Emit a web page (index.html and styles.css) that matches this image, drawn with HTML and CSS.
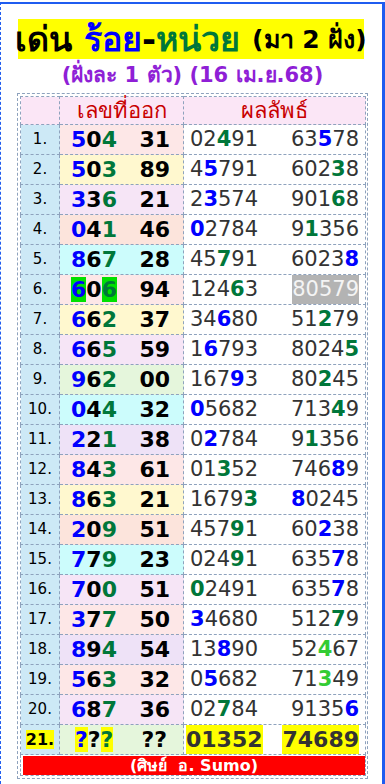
FILE: index.html
```html
<!DOCTYPE html>
<html lang="th">
<head>
    <meta charset="UTF-8">
    <meta name="viewport" content="width=device-width, initial-scale=1.0">
    <title>เด่น ร้อย-หน่วย</title>
    <link rel="stylesheet" href="styles.css">
</head>
<body>
    <div class="frame">
        <div class="title">
            <span class="k">เด่น</span>&nbsp;<span class="b">ร้อย</span><span class="k">-</span><span class="g">หน่วย</span>&nbsp;<span class="small">(มา 2 ฝั่ง)</span>
        </div>
        <div class="subtitle">(ฝั่งละ 1 ตัว) (16 เม.ย.68)</div>

        <div class="table-wrap">
            <table class="board">
                <colgroup>
                    <col class="c-no">
                    <col class="c-pick">
                    <col class="c-res">
                </colgroup>
                <tr class="head">
                    <td></td>
                    <td>เลขที่ออก</td>
                    <td>ผลลัพธ์</td>
                </tr>
                <tr>
                    <td class="no">1.</td>
                    <td class="pick bg-pink"><div class="cell"><span><i class="b">5</i>0<i class="g">4</i></span><span>31</span></div></td>
                    <td class="res"><div class="cell"><span>02<i class="g">4</i>91</span><span>63<i class="b">5</i>78</span></div></td>
                </tr>
                <tr>
                    <td class="no">2.</td>
                    <td class="pick bg-yellow"><div class="cell"><span><i class="b">5</i>0<i class="g">3</i></span><span>89</span></div></td>
                    <td class="res"><div class="cell"><span>4<i class="b">5</i>791</span><span>602<i class="g">3</i>8</span></div></td>
                </tr>
                <tr>
                    <td class="no">3.</td>
                    <td class="pick bg-lilac"><div class="cell"><span><i class="b">3</i>3<i class="g">6</i></span><span>21</span></div></td>
                    <td class="res"><div class="cell"><span>2<i class="b">3</i>574</span><span>901<i class="g">6</i>8</span></div></td>
                </tr>
                <tr>
                    <td class="no">4.</td>
                    <td class="pick bg-peach"><div class="cell"><span><i class="b">0</i>4<i class="g">1</i></span><span>46</span></div></td>
                    <td class="res"><div class="cell"><span><i class="b">0</i>2784</span><span>9<i class="g">1</i>356</span></div></td>
                </tr>
                <tr>
                    <td class="no">5.</td>
                    <td class="pick bg-cyan"><div class="cell"><span><i class="b">8</i>6<i class="g">7</i></span><span>28</span></div></td>
                    <td class="res"><div class="cell"><span>45<i class="g">7</i>91</span><span>6023<i class="b">8</i></span></div></td>
                </tr>
                <tr>
                    <td class="no">6.</td>
                    <td class="pick bg-pink"><div class="cell"><span><i class="b mark">6</i>0<i class="g mark">6</i></span><span>94</span></div></td>
                    <td class="res"><div class="cell"><span>124<i class="g">6</i>3</span><span class="grey">80579</span></div></td>
                </tr>
                <tr>
                    <td class="no">7.</td>
                    <td class="pick bg-yellow"><div class="cell"><span><i class="b">6</i>6<i class="g">2</i></span><span>37</span></div></td>
                    <td class="res"><div class="cell"><span>34<i class="b">6</i>80</span><span>51<i class="g">2</i>79</span></div></td>
                </tr>
                <tr>
                    <td class="no">8.</td>
                    <td class="pick bg-lilac"><div class="cell"><span><i class="b">6</i>6<i class="g">5</i></span><span>59</span></div></td>
                    <td class="res"><div class="cell"><span>1<i class="b">6</i>793</span><span>8024<i class="g">5</i></span></div></td>
                </tr>
                <tr>
                    <td class="no">9.</td>
                    <td class="pick bg-green"><div class="cell"><span><i class="b">9</i>6<i class="g">2</i></span><span>00</span></div></td>
                    <td class="res"><div class="cell"><span>167<i class="b">9</i>3</span><span>80<i class="g">2</i>45</span></div></td>
                </tr>
                <tr>
                    <td class="no">10.</td>
                    <td class="pick bg-cyan"><div class="cell"><span><i class="b">0</i>4<i class="g">4</i></span><span>32</span></div></td>
                    <td class="res"><div class="cell"><span><i class="b">0</i>5682</span><span>713<i class="g">4</i>9</span></div></td>
                </tr>
                <tr>
                    <td class="no">11.</td>
                    <td class="pick bg-violet"><div class="cell"><span><i class="b">2</i>2<i class="g">1</i></span><span>38</span></div></td>
                    <td class="res"><div class="cell"><span>0<i class="b">2</i>784</span><span>9<i class="g">1</i>356</span></div></td>
                </tr>
                <tr>
                    <td class="no">12.</td>
                    <td class="pick bg-pink"><div class="cell"><span><i class="b">8</i>4<i class="g">3</i></span><span>61</span></div></td>
                    <td class="res"><div class="cell"><span>01<i class="g">3</i>52</span><span>746<i class="b">8</i>9</span></div></td>
                </tr>
                <tr>
                    <td class="no">13.</td>
                    <td class="pick bg-yellow"><div class="cell"><span><i class="b">8</i>6<i class="g">3</i></span><span>21</span></div></td>
                    <td class="res"><div class="cell"><span>1679<i class="g">3</i></span><span><i class="b">8</i>0245</span></div></td>
                </tr>
                <tr>
                    <td class="no">14.</td>
                    <td class="pick bg-peach"><div class="cell"><span><i class="b">2</i>0<i class="g">9</i></span><span>51</span></div></td>
                    <td class="res"><div class="cell"><span>457<i class="g">9</i>1</span><span>60<i class="b">2</i>38</span></div></td>
                </tr>
                <tr>
                    <td class="no">15.</td>
                    <td class="pick bg-cyan"><div class="cell"><span><i class="b">7</i>7<i class="g">9</i></span><span>23</span></div></td>
                    <td class="res"><div class="cell"><span>024<i class="g">9</i>1</span><span>635<i class="b">7</i>8</span></div></td>
                </tr>
                <tr>
                    <td class="no">16.</td>
                    <td class="pick bg-lilac"><div class="cell"><span><i class="b">7</i>0<i class="g">0</i></span><span>51</span></div></td>
                    <td class="res"><div class="cell"><span><i class="g">0</i>2491</span><span>635<i class="b">7</i>8</span></div></td>
                </tr>
                <tr>
                    <td class="no">17.</td>
                    <td class="pick bg-pink"><div class="cell"><span><i class="b">3</i>7<i class="g">7</i></span><span>50</span></div></td>
                    <td class="res"><div class="cell"><span><i class="b">3</i>4680</span><span>512<i class="g">7</i>9</span></div></td>
                </tr>
                <tr>
                    <td class="no">18.</td>
                    <td class="pick bg-violet"><div class="cell"><span><i class="b">8</i>9<i class="g">4</i></span><span>54</span></div></td>
                    <td class="res"><div class="cell"><span>13<i class="b">8</i>90</span><span>52<i class="lg">4</i>67</span></div></td>
                </tr>
                <tr>
                    <td class="no">19.</td>
                    <td class="pick bg-pink"><div class="cell"><span><i class="b">5</i>6<i class="g">3</i></span><span>32</span></div></td>
                    <td class="res"><div class="cell"><span>0<i class="b">5</i>682</span><span>71<i class="lg">3</i>49</span></div></td>
                </tr>
                <tr>
                    <td class="no">20.</td>
                    <td class="pick bg-lilac"><div class="cell"><span><i class="b">6</i>8<i class="g">7</i></span><span>36</span></div></td>
                    <td class="res"><div class="cell"><span>02<i class="g">7</i>84</span><span>9135<i class="b">6</i></span></div></td>
                </tr>
                <tr class="next">
                    <td class="no"><span class="hl">21.</span></td>
                    <td class="pick bg-green"><div class="cell"><span class="qs"><i class="b hl">?</i>?<i class="g hl">?</i></span><span>??</span></div></td>
                    <td class="res"><div class="cell"><span class="hl">01352</span><span class="hl">74689</span></div></td>
                </tr>
                <tr>
                    <td colspan="3" class="foot"><div class="credit">(ศิษย์&nbsp; อ. Sumo)</div></td>
                </tr>
            </table>
        </div>
    </div>
</body>
</html>
```

FILE: styles.css
```css
body {
    margin: 0;
    background-color: white;
    font-family: Tahoma, "DejaVu Sans", sans-serif;
}
.frame {
    width: 381px;
    margin-top: 2px;
    border-top: 2px solid #1f5cf0;
    border-right: 3px solid #1f5cf0;
    border-left: 1px dashed #1f5cf0;
    padding-top: 15px;
    padding-bottom: 10px;
}
.title {
    width: 346px;
    height: 40px;
    margin-left: 17px;
    background-color: #ffff00;
    display: flex;
    align-items: center;
    justify-content: center;
    font-size: 34px;
    line-height: 1;
    font-weight: bold;
    white-space: nowrap;
}
.title .small {
    font-size: 25px;
}
.k { color: black; }
.b { color: #0000ff; }
.g { color: #00773a; }
.lg { color: #33cc33; }
i {
    font-style: normal;
}
.subtitle {
    height: 34px;
    text-align: center;
    color: #8f1fd6;
    font-size: 21px;
    font-weight: bold;
    line-height: 32px;
    padding-left: 2px;
}
.table-wrap {
    width: 345px;
    margin-left: 16px;
    padding: 2px;
    border: 1px dashed #8ea2bd;
}
.board {
    width: 345px;
    table-layout: fixed;
    border-collapse: collapse;
}
.c-no { width: 39px; }
.c-pick { width: 124px; }
.c-res { width: 182px; }
.board td {
    border: 1px dashed #8ea2bd;
    height: 29px;
    padding: 0;
    white-space: nowrap;
    line-height: 29px;
}
.head td {
    height: 27px;
    line-height: 27px;
    background-color: #fbe6f6;
    color: #c80000;
    font-size: 22px;
    text-align: center;
}
.no {
    background-color: #cde9f6;
    text-align: center;
    font-size: 15px;
    color: black;
}
.cell {
    display: flex;
    align-items: center;
    justify-content: space-between;
    height: 29px;
}
.pick {
    font-size: 22px;
    font-weight: bold;
    color: black;
}
.pick .cell {
    padding: 0 13px 0 11px;
}
.res {
    font-size: 21px;
    color: #333333;
}
.res .cell {
    padding: 0 6px 0 6px;
}
.res i {
    font-weight: bold;
}
.bg-pink { background-color: #fde7e7; }
.bg-yellow { background-color: #fff8cf; }
.bg-lilac { background-color: #f6e5f6; }
.bg-peach { background-color: #fce4dc; }
.bg-cyan { background-color: #ccfcfc; }
.bg-green { background-color: #e5f6dc; }
.bg-violet { background-color: #eee2f7; }
.mark {
    background-color: #00e000;
}
.grey {
    background-color: #b3b3b3;
    color: #f4f4f4;
}
.hl {
    background-color: #ffff00;
}
.qs {
    padding-left: 4px;
}
.next .pick .cell {
    padding-right: 16px;
}
.next .no {
    font-weight: bold;
    font-size: 16px;
}
.next .res {
    font-weight: bold;
    font-size: 22px;
}
.next .res .cell {
    padding: 0 6px 0 2px;
}
.foot {
    height: 20px !important;
    padding: 0 0 0 2px !important;
}
.credit {
    height: 19px;
    background-color: #ff0000;
    color: white;
    font-size: 16px;
    font-weight: bold;
    text-align: center;
    line-height: 19px;
}
```
